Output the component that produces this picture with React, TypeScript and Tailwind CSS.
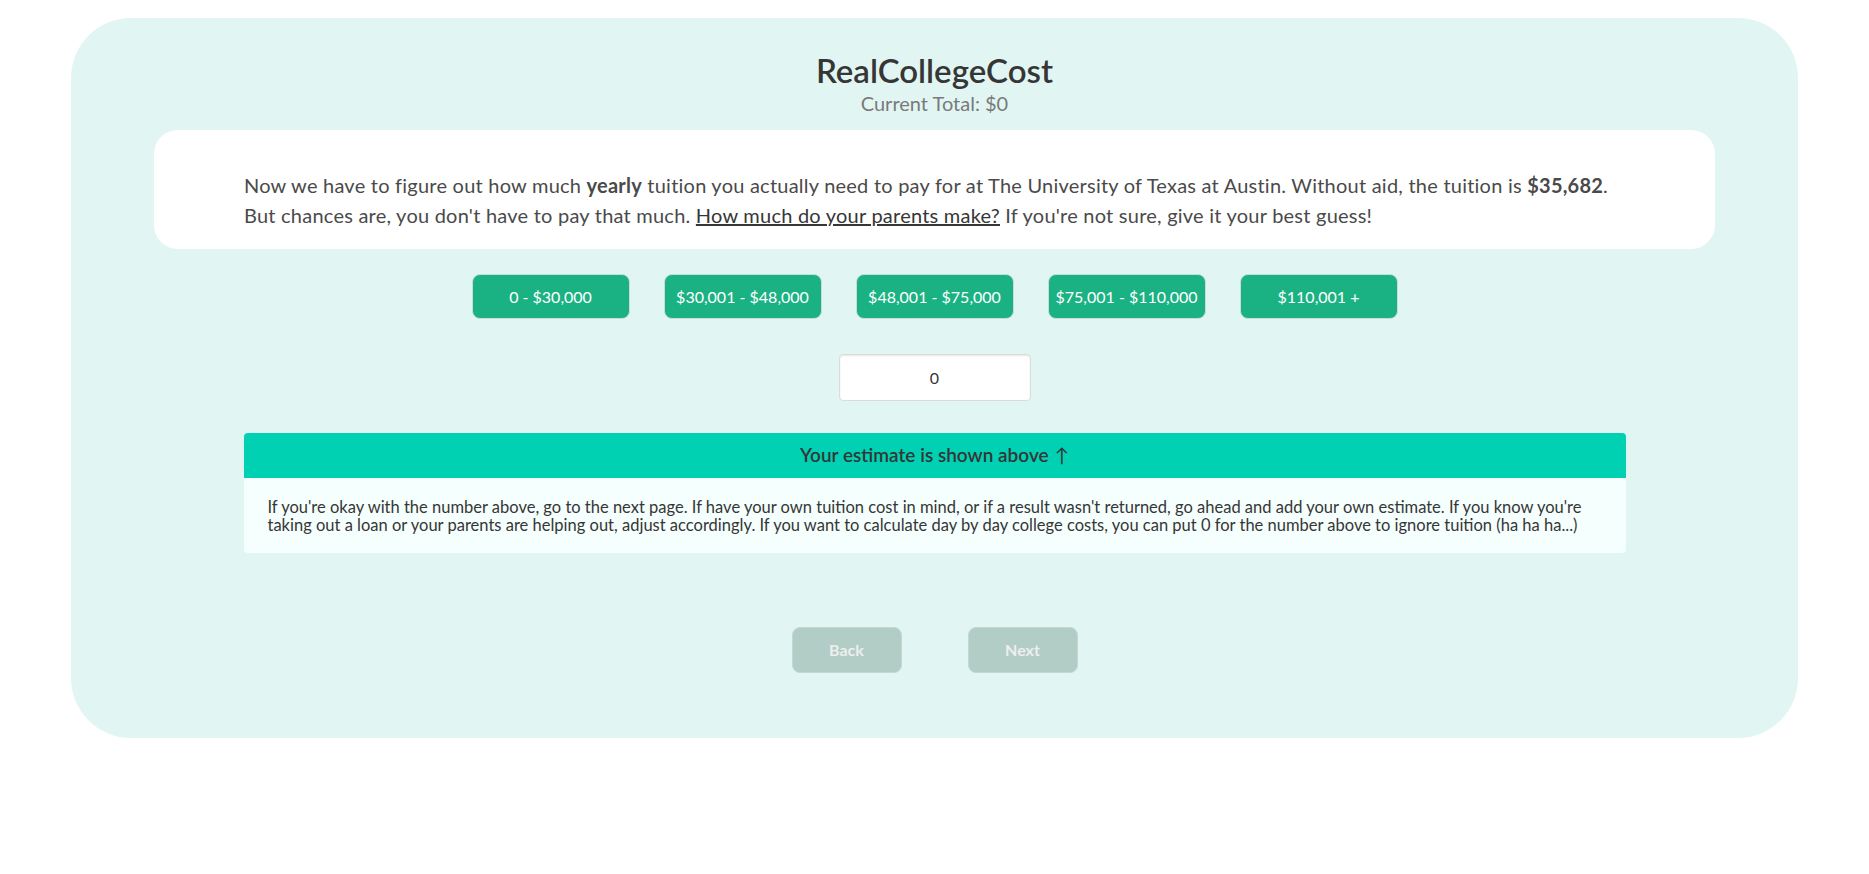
const incomeRanges = [
  "0 - $30,000",
  "$30,001 - $48,000",
  "$48,001 - $75,000",
  "$75,001 - $110,000",
  "$110,001 +",
]

export default function App() {
  return (
    <div className="min-h-screen bg-white px-[71px] pt-[18px] font-['Lato',sans-serif]">
      <div className="flex flex-col items-center rounded-[60px] bg-[#e1f6f3] pt-[34px] pb-[65px]">
        <h1 className="text-[33px] leading-[36px] font-semibold text-[#363636]">RealCollegeCost</h1>
        <p className="mt-[3px] text-[20px] leading-[25px] text-[#7a7a7a]">Current Total: $0</p>

        <div className="mt-[14px] self-stretch mx-[83px] rounded-[24px] bg-white px-[90px] pt-[40px] pb-[19px]">
          <p className="text-[20px] leading-[30px] tracking-[0.23px] text-[#4a4a4a]">
            Now we have to figure out how much <strong className="font-bold">yearly</strong> tuition you actually
            need to pay for at The University of Texas at Austin. Without aid, the tuition is{" "}
            <strong className="font-bold">$35,682</strong>.
            <br />
            But chances are, you don't have to pay that much.{" "}
            <span className="underline text-[#363636]">How much do your parents make?</span> If you're not sure,
            give it your best guess!
          </p>
        </div>

        <div className="mt-[25px] flex gap-[34px]">
          {incomeRanges.map((r) => (
            <button
              key={r}
              className="h-[45px] w-[158px] rounded-[8px] border border-[#c9dcd6] bg-[#1bb283] text-[16px] text-white"
            >
              {r}
            </button>
          ))}
        </div>

        <input
          defaultValue="0"
          className="mt-[35px] h-[47px] w-[192px] rounded-[4px] border border-[#dbdbdb] bg-white text-center text-[16px] text-[#363636] shadow-[inset_0_1px_2px_rgba(10,10,10,0.1)] outline-none"
        />

        <div className="mt-[32px] w-[1382px] overflow-hidden rounded-[4px]">
          <div className="flex h-[45px] items-center justify-center bg-[#00d1b2] text-[19px] font-semibold text-[#363636]">
            Your estimate is shown above <span className="ml-[6px] font-normal">↑</span>
          </div>
          <div className="bg-[#f5fffd] px-[24px] pt-[20px] pb-[19px] text-[16.5px] leading-[18px] text-[#363636]">
            If you're okay with the number above, go to the next page. If have your own tuition cost in mind, or if a
            result wasn't returned, go ahead and add your own estimate. If you know you're
            <br />
            taking out a loan or your parents are helping out, adjust accordingly. If you want to calculate day by day
            college costs, you can put 0 for the number above to ignore tuition (ha ha ha...)
          </div>
        </div>

        <div className="mt-[74px] flex gap-[66px]">
          <button className="h-[46px] w-[110px] rounded-[8px] border border-[#c6d6d1] bg-[#b2cdc6] text-[16px] font-bold text-[#eeeeee]">
            Back
          </button>
          <button className="h-[46px] w-[110px] rounded-[8px] border border-[#c6d6d1] bg-[#b2cdc6] text-[16px] font-bold text-[#eeeeee]">
            Next
          </button>
        </div>
      </div>
    </div>
  )
}
